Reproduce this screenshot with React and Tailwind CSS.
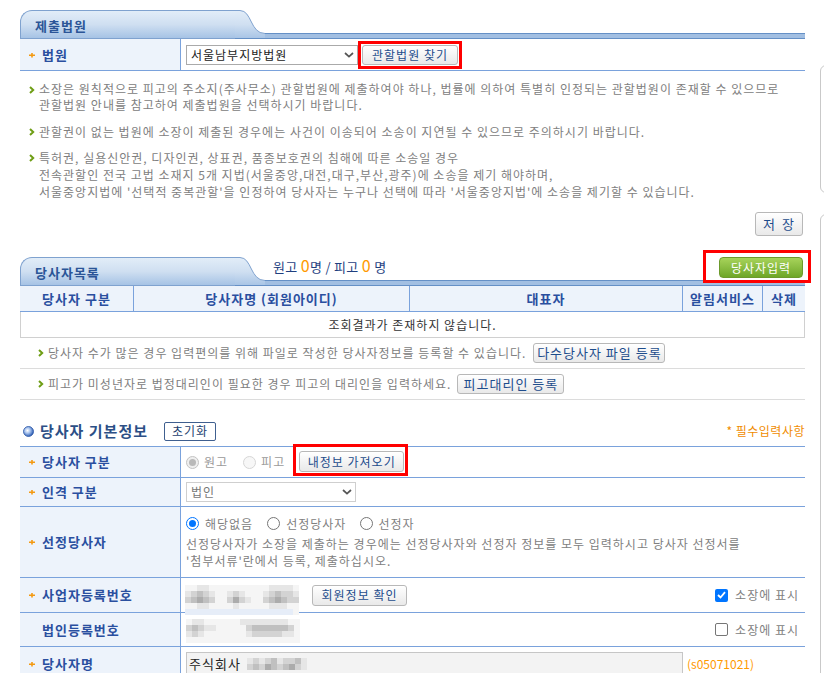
import React from 'react';

const tone = {
  w: 'bg-white',
  a: 'bg-[#f5f5f5]',
  b: 'bg-[#e6e6e6]',
  c: 'bg-[#d3d3d3]',
  d: 'bg-[#c0c0c0]',
  e: 'bg-[#acacac]',
  l: 'bg-[#e6edf8]',
};

// pixelated (masked) personal data
const bizNo = [
  'aabbaaaaaaaaaabbbba',
  'bcdcbaabcbaaabcdccb',
  'cdedcaacecbaacdedcc',
  'aabbaaaabaaaaabbbaa',
  'lllllllllllllllllla',
];
const corpNo = [
  'abbaaaaaabbbbbbbbaa',
  'cdcbbaaaaacddddddca',
  'bcbaaaaaaabcccccbba',
  'aaaaaaaaaaaaaaaaaaa',
];
const nameMask = ['bcbcdbccdb', 'cdcedcdecb'];

function Pixels({ rows, size = 'h-[6px] w-[6px]' }) {
  return (
    <div className="flex flex-col">
      {rows.map((r, i) => (
        <div key={i} className="flex">
          {r.split('').map((ch, j) => (
            <div key={j} className={`${size} ${tone[ch]}`} />
          ))}
        </div>
      ))}
    </div>
  );
}

function Arrow() {
  return (
    <svg width="6" height="8" viewBox="0 0 6 8" className="shrink-0">
      <path d="M1 1 L4.2 4 L1 7" fill="none" stroke="#6f9e16" strokeWidth="2" />
    </svg>
  );
}

function Star({ show = true }) {
  return (
    <svg width="6" height="6" viewBox="0 0 6 6" className={`shrink-0 ${show ? '' : 'invisible'}`}>
      <path d="M0 3.2 H6 M3 1 V5.5" stroke="#f39a12" strokeWidth="1.6" />
    </svg>
  );
}

function Chevron() {
  return (
    <svg width="10" height="6" viewBox="0 0 10 6">
      <path d="M1 1 L5 4.6 L9 1" fill="none" stroke="#555" strokeWidth="1.7" />
    </svg>
  );
}

function Btn({ children, className = '' }) {
  return (
    <div
      className={`flex shrink-0 items-center justify-center rounded-[3px] border border-[#b8b8b8] bg-gradient-to-b from-white to-[#e9e9e9] text-[12px] text-[#1e4d8c] shadow-[inset_0_1px_0_#fff] ${className}`}
    >
      {children}
    </div>
  );
}

function Radio({ checked, disabled }) {
  if (disabled) {
    return (
      <div className={`flex h-[13px] w-[13px] shrink-0 items-center justify-center rounded-full border ${checked ? 'border-[#c3c3c3] bg-[#efefef]' : 'border-[#d6d6d6] bg-[#f7f7f7]'}`}>
        {checked && <div className="h-[7px] w-[7px] rounded-full bg-[#b9b9b9]" />}
      </div>
    );
  }
  return (
    <div className={`flex h-[13px] w-[13px] shrink-0 items-center justify-center rounded-full border ${checked ? 'border-[#0075ff]' : 'border-[#767676]'} bg-white`}>
      {checked && <div className="h-[7px] w-[7px] rounded-full bg-[#0075ff]" />}
    </div>
  );
}

function Check({ checked }) {
  if (checked) {
    return (
      <div className="flex h-[13px] w-[13px] shrink-0 items-center justify-center rounded-[2px] bg-[#0075ff]">
        <svg width="9" height="8" viewBox="0 0 9 8">
          <path d="M1 4 L3.5 6.5 L8 1.2" fill="none" stroke="#fff" strokeWidth="1.8" />
        </svg>
      </div>
    );
  }
  return <div className="h-[13px] w-[13px] shrink-0 rounded-[2px] border border-[#767676] bg-white" />;
}

function TabHeader({ title, gid, children }) {
  return (
    <div className="flex h-[29px]">
      <div className="w-[215px] shrink-0 rounded-tl-[12px] border-l border-t border-b border-[#7fa2cf] bg-gradient-to-b from-[#e2edf8] via-[#cfdff1] to-[#a6c3e5] pl-[14px] pt-[7px] text-[13px] font-bold leading-[16px] text-[#2b5597]">
        {title}
      </div>
      <svg width="30" height="29" viewBox="0 0 30 29" className="shrink-0">
        <defs>
          <linearGradient id={gid} x1="0" y1="0" x2="0" y2="1">
            <stop offset="0" stopColor="#e2edf8" />
            <stop offset="0.5" stopColor="#cfdff1" />
            <stop offset="1" stopColor="#a6c3e5" />
          </linearGradient>
        </defs>
        <path d="M0 0.5 H5 C17 0.5 15 23.5 30 23.5 V29 H0 Z" fill={`url(#${gid})`} />
        <path d="M0 0.5 H5 C17 0.5 15 23.5 30 23.5" fill="none" stroke="#7fa2cf" />
        <path d="M0 28.5 H30" stroke="#6590c6" />
      </svg>
      <div className="flex min-w-0 flex-1 flex-col justify-end">
        {children}
        <div className="h-[6px] border-y border-[#6590c6] bg-[#a2bfe2]" />
      </div>
    </div>
  );
}

function FormRow({ label, required = true, h, children, top = false }) {
  return (
    <div className={`flex border-b border-[#7aa2dc] ${h}`}>
      <div className="flex w-[161px] shrink-0 items-center border-r border-[#7aa2dc] bg-[#edf3fb] pl-[9px] text-[13px] font-bold text-[#2a4f9f]">
        <Star show={required} />
        <span className="ml-[7px]">{label}</span>
      </div>
      <div className={`flex min-w-0 flex-1 pl-[5px] ${top ? 'items-start' : 'items-center'}`}>{children}</div>
    </div>
  );
}

export default function App() {
  return (
    <div className="flex h-[673px] w-full overflow-hidden bg-white font-['Noto_Sans_CJK_KR','Noto_Sans',sans-serif] tracking-[1px]">
      <div className="ml-[20px] w-[785px] shrink-0 pt-[10px]">
        {/* 제출법원 */}
        <TabHeader title="제출법원" gid="tab1" />
        <FormRow label="법원" h="h-[32px]">
          <div className="flex h-[20px] w-[172px] items-center justify-between border border-[#aaaaaa] bg-white pl-[4px] pr-[3px] text-[12px] text-[#222]">
            <span>서울남부지방법원</span>
            <Chevron />
          </div>
          <div className="border-[3px] border-[#ff0000] p-[1px]">
            <Btn className="h-[20px] w-[96px]">관할법원 찾기</Btn>
          </div>
        </FormRow>

        <div className="pl-[9px] pt-[10px] text-[12px] text-[#808080]">
          <div className="flex gap-[4px]">
            <div className="pt-[5px]"><Arrow /></div>
            <p className="leading-[16px]">
              소장은 원칙적으로 피고의 주소지(주사무소) 관할법원에 제출하여야 하나, 법률에 의하여 특별히 인정되는 관할법원이 존재할 수 있으므로
              <br />
              관할법원 안내를 참고하여 제출법원을 선택하시기 바랍니다.
            </p>
          </div>
          <div className="mt-[10px] flex gap-[4px]">
            <div className="pt-[5px]"><Arrow /></div>
            <p className="leading-[17px]">관할권이 없는 법원에 소장이 제출된 경우에는 사건이 이송되어 소송이 지연될 수 있으므로 주의하시기 바랍니다.</p>
          </div>
          <div className="mt-[9px] flex gap-[4px]">
            <div className="pt-[5px]"><Arrow /></div>
            <p className="leading-[17px]">
              특허권, 실용신안권, 디자인권, 상표권, 품종보호권의 침해에 따른 소송일 경우
              <br />
              전속관할인 전국 고법 소재지 5개 지법(서울중앙,대전,대구,부산,광주)에 소송을 제기 해야하며,
              <br />
              서울중앙지법에 '선택적 중복관할'을 인정하여 당사자는 누구나 선택에 따라 '서울중앙지법'에 소송을 제기할 수 있습니다.
            </p>
          </div>
        </div>

        <div className="mt-[12px] flex justify-end pr-[2px]">
          <Btn className="h-[24px] w-[48px] text-[13px] [word-spacing:2px]">저 장</Btn>
        </div>

        {/* 당사자목록 */}
        <div className="mt-[21px]">
          <TabHeader title="당사자목록" gid="tab2">
            <div className="flex h-[23px] items-start justify-between">
              <div className="ml-[8px] text-[13px] leading-[16px] tracking-[0.3px] text-[#1f3f7f]">
                원고 <span className="text-[16px] text-[#ff9a00]">0</span>명 / 피고 <span className="text-[16px] text-[#ff9a00]">0</span> 명
              </div>
              <div className="relative z-10 -mr-[6px] -mt-[7px] border-[3px] border-[#ff0000] pb-[2px] pl-[13px] pr-[5px] pt-[4px]">
                <div className="flex h-[21px] w-[84px] items-center justify-center rounded-[4px] border border-[#6c9a2c] bg-gradient-to-b from-[#a7d35a] to-[#6ea728] text-[12px] text-white">
                  당사자입력
                </div>
              </div>
            </div>
          </TabHeader>
        </div>

        <div className="grid h-[26px] grid-cols-[114px_276px_273px_80px_1fr] border-b border-[#7aa2dc] bg-[#edf3fb] text-[13px] font-bold text-[#2a4f9f]">
          <div className="flex items-center justify-center border-r border-[#7aa2dc]">당사자 구분</div>
          <div className="flex items-center justify-center border-r border-[#7aa2dc]">당사자명 (회원아이디)</div>
          <div className="flex items-center justify-center border-r border-[#7aa2dc]">대표자</div>
          <div className="flex items-center justify-center border-r border-[#7aa2dc]">알림서비스</div>
          <div className="flex items-center justify-center">삭제</div>
        </div>
        <div className="flex h-[26px] items-center justify-center border-x border-b border-[#d0d0d0] text-[12px] text-[#333]">
          조회결과가 존재하지 않습니다.
        </div>
        <div className="flex h-[31px] items-center border-b border-[#dcdcdc] pl-[18px] text-[12px] text-[#808080]">
          <Arrow />
          <span className="ml-[4px]">당사자 수가 많은 경우 입력편의를 위해 파일로 작성한 당사자정보를 등록할 수 있습니다.</span>
          <Btn className="ml-[7px] h-[20px] w-[132px] text-[13px]">다수당사자 파일 등록</Btn>
        </div>
        <div className="flex h-[31px] items-center border-b border-[#dcdcdc] pl-[18px] text-[12px] text-[#808080]">
          <Arrow />
          <span className="ml-[4px]">피고가 미성년자로 법정대리인이 필요한 경우 피고의 대리인을 입력하세요.</span>
          <Btn className="ml-[6px] h-[20px] w-[107px] text-[13px]">피고대리인 등록</Btn>
        </div>

        {/* 당사자 기본정보 */}
        <div className="mt-[21px] flex h-[20px] items-center">
          <svg width="11" height="11" viewBox="0 0 11 11" className="ml-[3px] shrink-0">
            <defs>
              <radialGradient id="dot" cx="0.4" cy="0.4" r="0.6">
                <stop offset="0" stopColor="#ffffff" />
                <stop offset="0.45" stopColor="#a9c4ee" />
                <stop offset="1" stopColor="#2f5fb5" />
              </radialGradient>
            </defs>
            <circle cx="5.5" cy="5.5" r="5" fill="url(#dot)" stroke="#2a56a6" strokeWidth="0.8" />
          </svg>
          <span className="ml-[6px] text-[15px] font-bold text-[#2c4f86]">당사자 기본정보</span>
          <div className="ml-[16px] flex h-[19px] w-[52px] items-center justify-center rounded-[2px] border border-[#3f5f8f] bg-white text-[12px] text-[#1e3f70]">
            초기화
          </div>
          <span className="ml-auto text-[12px] tracking-[0.5px] text-[#f08c00]">* 필수입력사항</span>
        </div>

        <div className="mt-[5px] border-t border-[#7aa2dc]">
          <FormRow label="당사자 구분" h="h-[31px]">
            <Radio checked disabled />
            <span className="ml-[5px] text-[12px] text-[#9a9a9a]">원고</span>
            <div className="ml-[15px]"><Radio disabled /></div>
            <span className="ml-[5px] text-[12px] text-[#9a9a9a]">피고</span>
            <div className="relative top-[-2px] z-10 ml-[8px] border-[3px] border-[#ff0000] pb-[1px] pl-[3px] pr-[1px] pt-[4px]">
              <Btn className="h-[21px] w-[105px]">내정보 가져오기</Btn>
            </div>
          </FormRow>
          <FormRow label="인격 구분" h="h-[29px]">
            <div className="flex h-[20px] w-[170px] items-center justify-between border border-[#cfcfcf] bg-white pl-[4px] pr-[3px] text-[12px] text-[#777]">
              <span>법인</span>
              <Chevron />
            </div>
          </FormRow>
          <FormRow label="선정당사자" h="h-[71px]" top>
            <div className="flex flex-col pt-[8px] text-[12px] text-[#808080]">
              <div className="flex h-[17px] items-center">
                <Radio checked />
                <span className="ml-[6px]">해당없음</span>
                <div className="ml-[14px]"><Radio /></div>
                <span className="ml-[6px]">선정당사자</span>
                <div className="ml-[14px]"><Radio /></div>
                <span className="ml-[5px]">선정자</span>
              </div>
              <p className="mt-[3px] leading-[17px]">
                선정당사자가 소장을 제출하는 경우에는 선정당사자와 선정자 정보를 모두 입력하시고 당사자 선정서를
                <br />
                '첨부서류'란에서 등록, 제출하십시오.
              </p>
            </div>
          </FormRow>
          <FormRow label="사업자등록번호" h="h-[35px]">
            <div className="-ml-[1px] mt-[9px]">
              <Pixels rows={bizNo} />
            </div>
            <Btn className="ml-[13px] h-[21px] w-[95px]">회원정보 확인</Btn>
            <div className="ml-auto flex items-center pr-[6px] text-[12px] text-[#808080]">
              <Check checked />
              <span className="ml-[7px]">소장에 표시</span>
            </div>
          </FormRow>
          <FormRow label="법인등록번호" required={false} h="h-[34px]">
            <div className="mt-[2px]">
              <Pixels rows={corpNo} />
            </div>
            <div className="ml-auto flex items-center pr-[6px] text-[12px] text-[#808080]">
              <Check />
              <span className="ml-[7px]">소장에 표시</span>
            </div>
          </FormRow>
          <FormRow label="당사자명" h="h-[34px]" top>
            <div className="mt-[5px] flex items-center">
              <div className="flex h-[24px] w-[497px] items-center border border-[#c6c6c6] bg-[#f3f3f3] pl-[2px] text-[13px] text-[#222]">
                <span>주식회사</span>
                <div className="ml-[6px]">
                  <Pixels rows={nameMask} />
                </div>
              </div>
              <span className="ml-[4px] text-[12px] tracking-normal text-[#ff9a00]">(s05071021)</span>
            </div>
          </FormRow>
        </div>
      </div>

      {/* side panels (cut off at the window edge) */}
      <div className="ml-[15px] w-[40px] shrink-0">
        <div className="mt-[65px] h-[128px] rounded-[6px] border border-[#c9c9c9]" />
        <div className="mt-[21px] h-[600px] rounded-[6px] border border-[#c9c9c9]" />
      </div>
    </div>
  );
}
